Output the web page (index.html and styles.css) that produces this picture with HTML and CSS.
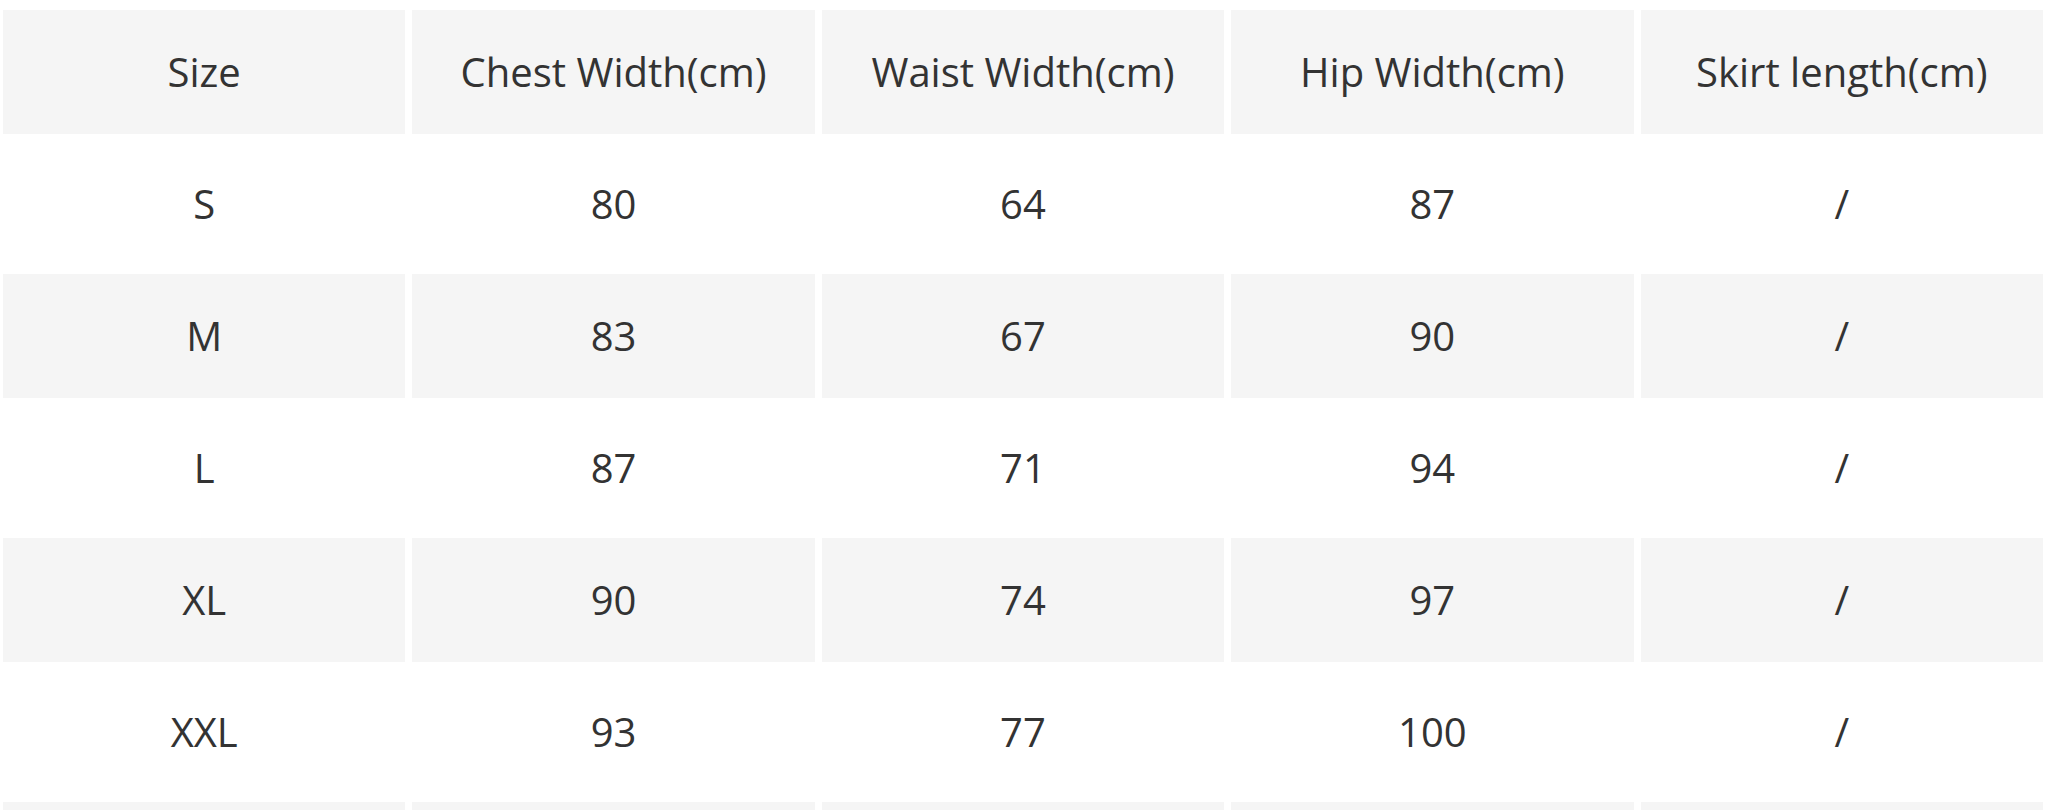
FILE: index.html
```html
<!DOCTYPE html>
<html lang="en">
<head>
<meta charset="utf-8">
<title>Size Chart</title>
<link rel="stylesheet" href="styles.css">
</head>
<body>
<table class="size-table">
  <thead>
    <tr class="row-shaded">
      <th>Size</th>
      <th>Chest Width(cm)</th>
      <th>Waist Width(cm)</th>
      <th>Hip Width(cm)</th>
      <th>Skirt length(cm)</th>
    </tr>
  </thead>
  <tbody>
    <tr><td>S</td><td>80</td><td>64</td><td>87</td><td>/</td></tr>
    <tr class="row-shaded"><td>M</td><td>83</td><td>67</td><td>90</td><td>/</td></tr>
    <tr><td>L</td><td>87</td><td>71</td><td>94</td><td>/</td></tr>
    <tr class="row-shaded"><td>XL</td><td>90</td><td>74</td><td>97</td><td>/</td></tr>
    <tr><td>XXL</td><td>93</td><td>77</td><td>100</td><td>/</td></tr>
    <tr class="row-shaded"><td></td><td></td><td></td><td></td><td></td></tr>
  </tbody>
</table>
</body>
</html>
```
FILE: styles.css
```css
html, body {
  margin: 0;
  padding: 0;
  background: #ffffff;
  overflow: hidden;
}

body {
  font-family: "Open Sans", "Liberation Sans", sans-serif;
  color: #333333;
}

.size-table {
  border-collapse: separate;
  border-spacing: 7px 8px;
  margin: 2px 0 0 -4px;
  width: calc(100% + 3px);
  table-layout: fixed;
}

.size-table th,
.size-table td {
  height: 124px;
  padding: 0;
  text-align: center;
  vertical-align: middle;
  font-size: 40px;
  font-weight: 400;
  line-height: 1;
  background: #ffffff;
}

.size-table .row-shaded th,
.size-table .row-shaded td {
  background: #f5f5f5;
}
```
